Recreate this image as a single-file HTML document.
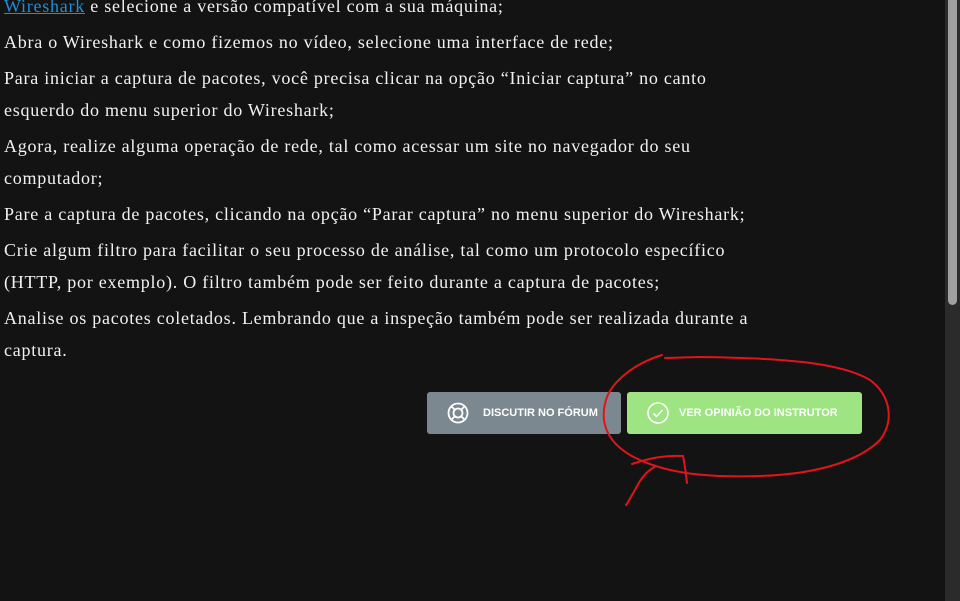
<!DOCTYPE html>
<html><head><meta charset="utf-8"><style>
html,body{margin:0;padding:0;background:#131313;width:960px;height:601px;overflow:hidden}
.t{position:absolute;left:4px;top:-10px;width:772px;font-family:"Liberation Serif",serif;font-size:18px;letter-spacing:0.75px;color:#f1f1f1;line-height:32px}
.t p{margin:0 0 4px 0}
a{color:#1e8fd8;text-decoration:underline}
.btn{position:absolute;top:392px;height:42px;border-radius:3px;font-family:"Liberation Sans",sans-serif;font-weight:bold;font-size:11px;color:#fff;display:flex;align-items:center;white-space:nowrap}
.sb{position:absolute;left:945px;top:0;width:15px;height:601px;background:#2b2b2b}
.th{position:absolute;left:948px;top:0;width:9px;height:305px;background:#a0a0a0;border-radius:0 0 5px 5px}
</style></head><body>
<div class="t">
<p><a>Wireshark</a> e selecione a versão compatível com a sua máquina;</p>
<p>Abra o Wireshark e como fizemos no vídeo, selecione uma interface de rede;</p>
<p>Para iniciar a captura de pacotes, você precisa clicar na opção “Iniciar captura” no canto esquerdo do menu superior do Wireshark;</p>
<p>Agora, realize alguma operação de rede, tal como acessar um site no navegador do seu computador;</p>
<p>Pare a captura de pacotes, clicando na opção “Parar captura” no menu superior do Wireshark;</p>
<p>Crie algum filtro para facilitar o seu processo de análise, tal como um protocolo específico (HTTP, por exemplo). O filtro também pode ser feito durante a captura de pacotes;</p>
<p>Analise os pacotes coletados. Lembrando que a inspeção também pode ser realizada durante a captura.</p>
</div>
<div class="btn" style="left:427px;width:194px;background:#7b8890">
<svg style="margin-left:20px;margin-right:14px" width="22" height="22" viewBox="0 0 22 22" fill="none" stroke="#fff" stroke-width="1.8"><circle cx="11" cy="11" r="9.5"/><circle cx="11" cy="11" r="4.5"/><path d="M4.3 4.3L7.8 7.8M17.7 4.3L14.2 7.8M4.3 17.7L7.8 14.2M17.7 17.7L14.2 14.2"/></svg>DISCUTIR NO FÓRUM</div>
<div class="btn" style="left:627px;width:235px;background:#9ee482">
<svg style="margin-left:20px;margin-right:10px" width="22" height="22" viewBox="0 0 22 22" fill="none" stroke="#fff" stroke-width="1.6"><circle cx="11" cy="11" r="10"/><path d="M6.5 11.5L9.5 14.5L15.5 8"/></svg>VER OPINIÃO DO INSTRUTOR</div>
<svg style="position:absolute;left:0;top:0" width="960" height="601" fill="none" stroke="#e0141c" stroke-width="2" stroke-linecap="round">
<path d="M662 355C630 365 610 385 606 400C600 420 605 440 630 455C660 472 700 478 760 476C820 474 860 460 880 440C895 420 890 395 870 380C840 362 780 358 700 357L665 358"/>
<path d="M632 464C650 458 665 455 683 456C685 465 686 475 687 483"/>
<path d="M656 466C645 472 640 480 635 490C630 498 628 503 626 505"/>
</svg>
<div class="sb"></div><div class="th"></div>
</body></html>
